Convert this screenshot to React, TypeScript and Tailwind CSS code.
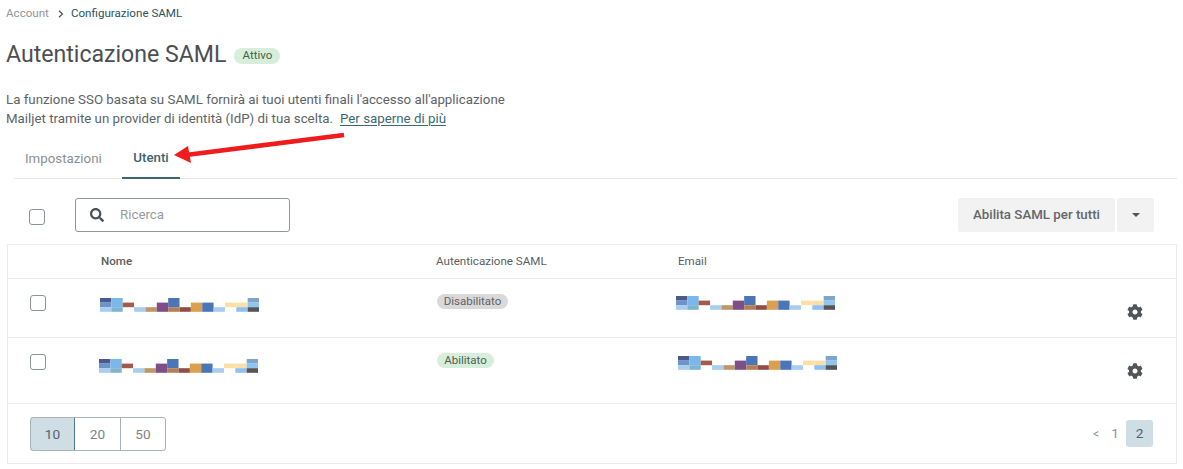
import { FaCog, FaSearch } from "react-icons/fa";

const C = { navy: "#4a5a8c", mid: "#6d93c9", pale: "#a8cdee", sky: "#7ab8ea", teal: "#7fb3cf", brick: "#a5584c", tan: "#bf956a", plum: "#7d4e87", blue: "#4a76b8", brown: "#b57f56", maroon: "#8f4f48", amber: "#dc9f4d", cream: "#fbe0a5", light: "#8fc0f0", steel: "#7fa5c9", bright: "#8fc5f2", dark: "#555555" };

// [column, row, rowSpan, colour]
const cells: [number, number, number, string][] = [
  [0, 0, 1, C.navy], [0, 1, 1, C.mid], [0, 2, 1, C.pale],
  [1, 0, 2, C.sky], [1, 2, 1, C.teal],
  [2, 1, 1, C.brick],
  [3, 2, 1, C.pale],
  [4, 2, 1, C.tan],
  [5, 1, 2, C.plum],
  [6, 0, 2, C.blue], [6, 2, 1, C.brown],
  [7, 2, 1, C.maroon],
  [8, 1, 2, C.amber],
  [9, 1, 2, C.blue],
  [10, 2, 1, C.pale],
  [11, 1, 1, C.cream],
  [12, 1, 1, C.cream], [12, 2, 1, C.light],
  [13, 0, 1, C.steel], [13, 1, 1, C.bright], [13, 2, 1, C.dark],
];

function Redacted({ className }: { className: string }) {
  return (
    <svg width="159" height="14" viewBox="0 0 159 14" className={`blur-[0.4px] ${className}`} aria-hidden="true">
      {cells.map(([c, r, s, f], i) => (
        <rect key={i} x={c * 11.36} y={r * 4.6} width="11.36" height={s * 4.6} fill={f} />
      ))}
    </svg>
  );
}

function Check({ className = "" }: { className?: string }) {
  return <div className={`h-[16px] w-[16px] rounded-[3px] border-[1.5px] border-[#8b9499] bg-white ${className}`} />;
}

function Row({ badge, badgeClass, badgeWidth, nameClass, emailClass, height, checkTop, badgeTop, gearTop }: { badge: string; badgeClass: string; badgeWidth: string; nameClass: string; emailClass: string; height: string; checkTop: string; badgeTop: string; gearTop: string }) {
  return (
    <div className={`flex border-b border-[#e9ebec] ${height}`}>
      <div className="w-[92px] shrink-0 pl-[22px]">
        <Check className={checkTop} />
      </div>
      <div className="w-[337px] shrink-0">
        <Redacted className={nameClass} />
      </div>
      <div className="w-[240px] shrink-0">
        <div className={`flex h-[15px] items-center justify-center rounded-full text-[11.5px] leading-none ${badgeClass} ${badgeWidth} ${badgeTop}`}>{badge}</div>
      </div>
      <div className="w-[450px] shrink-0">
        <Redacted className={emailClass} />
      </div>
      <div className={`text-[#4f5559] ${gearTop}`}>
        <FaCog size={16} />
      </div>
    </div>
  );
}

export default function App() {
  return (
    <div className="relative h-[469px] w-[1183px] overflow-hidden bg-white font-['Roboto',sans-serif] text-[#555a5e]">
      <nav className="flex h-[28px] items-center pl-[6px] text-[11.6px]">
        <span className="text-[#8f9599]">Account</span>
        <svg width="6" height="8" viewBox="0 0 6 8" className="ml-[9px] mr-[7px]" fill="none" stroke="#4b5c62" strokeWidth="1.3">
          <path d="M1 .8 4.4 4 1 7.2" />
        </svg>
        <span className="text-[#2a5460]">Configurazione SAML</span>
      </nav>

      <div className="mt-[11px] flex h-[32px] items-center pl-[6px]">
        <h1 className="text-[23.1px] leading-[32px] font-normal text-[#4c4f52]">Autenticazione SAML</h1>
        <span className="mt-[1px] ml-[8px] flex h-[16px] w-[46px] items-center justify-center rounded-full bg-[#d6eedb] text-[11.5px] text-[#46604e]">Attivo</span>
      </div>

      <p className="mt-[19px] pl-[6px] text-[13.3px] leading-[19px] text-[#5e6367]">
        La funzione SSO basata su SAML fornirà ai tuoi utenti finali l'accesso all'applicazione
        <br />
        Mailjet tramite un provider di identità (IdP) di tua scelta.
        <a className="ml-[7px] text-[#3b6a76] underline underline-offset-2">Per saperne di più</a>
      </p>

      <div className="mt-[11px] ml-[14px] mr-[6px] flex h-[40px] border-b border-[#e6e8e9] text-[13.3px]">
        <div className="flex h-[40px] w-[108px] items-center pl-[11px] text-[#8a8f93]">Impostazioni</div>
        <div className="flex h-[40px] w-[58px] items-center justify-center border-b-2 border-[#3d6470] font-medium text-[#3d6470]">Utenti</div>
      </div>

      <div className="flex h-[65px] items-start">
        <Check className="mt-[30px] ml-[29px]" />
        <div className="mt-[19px] ml-[30px] flex h-[34px] w-[215px] items-center rounded-[3px] border border-[#8e979c]">
          <FaSearch size={14} className="ml-[14px] text-[#4a5054]" />
          <span className="ml-[16px] text-[13.3px] text-[#969ca0]">Ricerca</span>
        </div>
        <div className="mt-[19px] ml-auto flex h-[34px] w-[157px] items-center justify-center rounded-[2px] bg-[#f2f2f2] text-[13.3px] font-medium text-[#63676a]">Abilita SAML per tutti</div>
        <div className="mt-[19px] mr-[29px] ml-[2px] flex h-[34px] w-[37px] items-center justify-center rounded-[2px] bg-[#f2f2f2]">
          <div className="h-0 w-0 border-x-[4px] border-t-[4px] border-x-transparent border-t-[#4f5559]" />
        </div>
      </div>

      <section className="ml-[7px] w-[1170px] border border-[#e9ebec] bg-white">
        <div className="flex h-[34px] items-center border-b border-[#e9ebec] text-[11.6px] text-[#5a5e62]">
          <span className="ml-[93px] w-[335px] font-medium">Nome</span>
          <span className="w-[242px]">Autenticazione SAML</span>
          <span>Email</span>
        </div>
        <Row badge="Disabilitato" badgeClass="bg-[#d9d9d9] text-[#5f6265]" badgeWidth="w-[71px]" nameClass="mt-[19px]" emailClass="mt-[17px] -ml-[1px]" height="h-[59px]" checkTop="mt-[16px]" badgeTop="mt-[15px]" gearTop="mt-[25px]" />
        <Row badge="Abilitato" badgeClass="bg-[#d6eedb] text-[#4d5f52]" badgeWidth="w-[57px]" nameClass="mt-[21px] -ml-[1px]" emailClass="mt-[18px] ml-[1px]" height="h-[66px]" checkTop="mt-[16px]" badgeTop="mt-[15px]" gearTop="mt-[25px]" />
        <div className="flex h-[59px] items-start justify-between">
          <div className="mt-[13px] ml-[22px] flex h-[34px] w-[136px] overflow-hidden rounded-[3px] border border-[#a9b2b6] text-[13.6px] text-[#7d8387]">
            <div className="-m-[1px] mr-0 flex w-[45px] items-center justify-center rounded-l-[3px] border border-[#4e7885] bg-[#cfdde5] text-[#53636c]">10</div>
            <div className="flex w-[46px] items-center justify-center border-r border-[#a9b2b6]">20</div>
            <div className="flex flex-1 items-center justify-center">50</div>
          </div>
          <div className="mt-[16px] mr-[23px] flex h-[27px] items-center text-[13.6px] text-[#8d9296]">
            <span className="text-[12px]">&lt;</span>
            <span className="ml-[12px] w-[8px] text-center">1</span>
            <span className="ml-[7px] flex h-[27px] w-[27px] items-center justify-center rounded-[3px] bg-[#cfdde5] text-[#4d6470]">2</span>
          </div>
        </div>
      </section>

      <svg className="pointer-events-none absolute top-0 left-0" width="1183" height="469" aria-hidden="true">
        <path d="M344 135 186 155" stroke="#ee1c1c" strokeWidth="4.5" fill="none" />
        <path d="M174 155 188 146 191 163Z" fill="#ee1c1c" />
      </svg>
    </div>
  );
}
